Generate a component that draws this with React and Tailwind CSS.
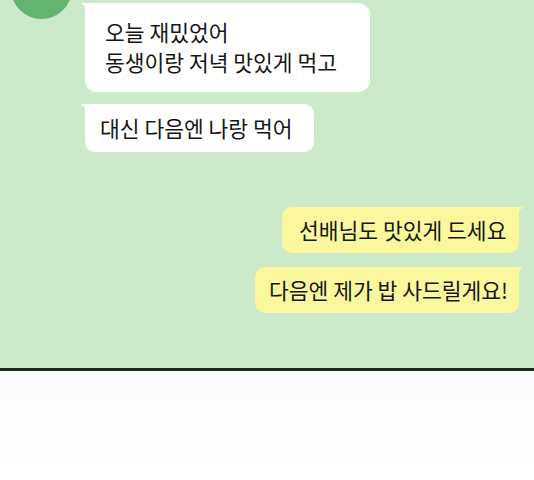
export default function App() {
  const font = { fontFamily: '"Noto Sans CJK KR", "Noto Sans", sans-serif' };
  return (
    <div className="w-[534px] h-[480px] overflow-hidden bg-white" style={font}>
      <div className="h-[368px] bg-[#cceacb] relative">
        <div className="flex">
          <div className="ml-[11px] -mt-[42px] w-[61px] h-[61px] rounded-full bg-[#62b46f] shrink-0" />
          <div className="ml-[13px] mt-[3px] flex flex-col items-start gap-[12px]">
            <div className="relative bg-white rounded-[12px] rounded-tl-[2px] w-[285px] h-[89px] pl-[20px] pt-[14px] text-[21.5px] leading-[30px] text-[#161616] whitespace-nowrap">
              <div className="absolute -left-[4px] top-0 w-[8px] h-[8px] bg-white [clip-path:polygon(0_0,100%_0,100%_100%)]" />
              <div>오늘 재밌었어</div>
              <div>동생이랑 저녁 맛있게 먹고</div>
            </div>
            <div className="relative bg-white rounded-[10px] rounded-tl-[2px] w-[229px] h-[48px] pl-[15px] flex items-center text-[21.5px] text-[#161616] whitespace-nowrap">
              <div className="absolute -left-[4px] top-0 w-[8px] h-[8px] bg-white [clip-path:polygon(0_0,100%_0,100%_100%)]" />
              대신 다음엔 나랑 먹어
            </div>
          </div>
        </div>
        <div className="mt-[55px] mr-[15px] flex flex-col items-end gap-[14px]">
          <div className="relative bg-[#fbf79c] rounded-[10px] rounded-tr-[2px] w-[237px] h-[46px] pl-[17px] flex items-center text-[21.5px] text-[#161616] whitespace-nowrap">
            <div className="absolute -right-[4px] top-0 w-[8px] h-[8px] bg-[#fbf79c] [clip-path:polygon(0_0,100%_0,0_100%)]" />
            선배님도 맛있게 드세요
          </div>
          <div className="relative bg-[#fbf79c] rounded-[10px] rounded-tr-[2px] w-[264px] h-[46px] pl-[14px] flex items-center text-[21.5px] text-[#161616] whitespace-nowrap">
            <div className="absolute -right-[4px] top-0 w-[8px] h-[8px] bg-[#fbf79c] [clip-path:polygon(0_0,100%_0,0_100%)]" />
            다음엔 제가 밥 사드릴게요!
          </div>
        </div>
      </div>
      <div className="h-[3px] bg-[#1c2a1c]" />
      <div className="h-[109px] bg-gradient-to-b from-[#fcfcfc] to-white" />
    </div>
  );
}
